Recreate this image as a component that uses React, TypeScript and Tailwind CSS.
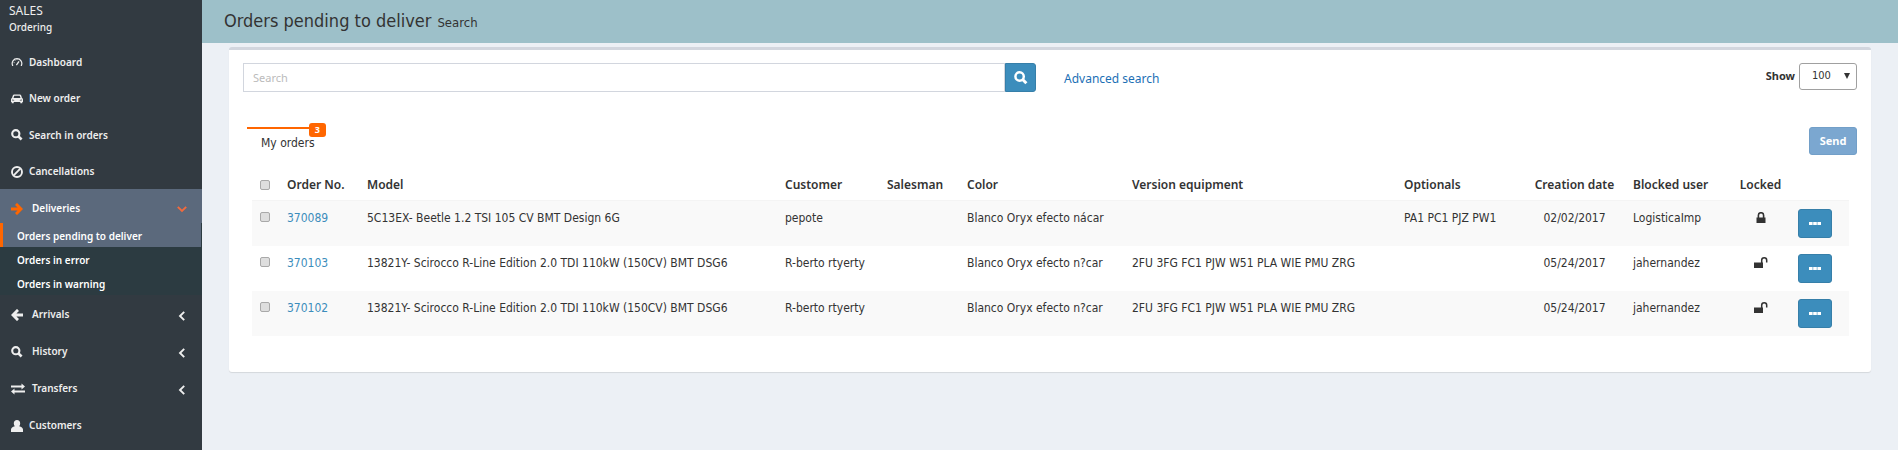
import React from "react";

type IconProps = { className?: string };

const DashboardIcon = ({ className }: IconProps) => (
  <svg viewBox="0 0 12 12" className={className} fill="none" stroke="currentColor" aria-hidden="true">
    <path d="M2.2 9.4H1.6A4.8 4.8 0 1 1 10.4 9.4H9.8" strokeWidth="1.2" />
    <path d="M5.4 9.2L8 5.4" strokeWidth="1.3" />
    <path d="M2.6 6.6h1M4 4.3l.6.6M6 3.2v.9" strokeWidth=".8" />
  </svg>
);

const CarIcon = ({ className }: IconProps) => (
  <svg viewBox="0 0 12 12" className={className} fill="currentColor" fillRule="evenodd" aria-hidden="true">
    <path d="M3.2 1.500H8.800C9.500 1.500 10 1.900 10.200 2.500L11 5C11.600 5.300 12 5.800 12 6.500V9H11.300V10.300H9.300V9H2.700V10.300H.7V9H0V6.500C0 5.800 .4 5.300 1 5L1.800 2.500C2 1.900 2.500 1.500 3.200 1.500zM3.300 2.700L2.500 4.900H9.500L8.700 2.700zM1.200 6.400V7.500H3.200V6.900zM10.800 6.400V7.500H8.800V6.900z" />
  </svg>
);

const SearchIcon = ({ className }: IconProps) => (
  <svg viewBox="0 0 12 12" className={className} fill="none" stroke="currentColor" aria-hidden="true">
    <circle cx="4.8" cy="4.7" r="3.6" strokeWidth="2.1" />
    <path d="M7.4 7.3L10.600 10.500" strokeWidth="2.600" />
  </svg>
);

const BanIcon = ({ className }: IconProps) => (
  <svg viewBox="0 0 12 12" className={className} fill="none" stroke="currentColor" strokeWidth="1.900" aria-hidden="true">
    <circle cx="6" cy="6" r="5" />
    <path d="M2.700 9.300L9.300 2.700" />
  </svg>
);

const ArrowIcon = ({ className }: IconProps) => (
  <svg viewBox="0 0 12 12" className={className} fill="none" stroke="currentColor" strokeWidth="2.800" aria-hidden="true">
    <path d="M0 6H10M5 .9L10.100 6L5 11.100" />
  </svg>
);

const TransferIcon = ({ className }: IconProps) => (
  <svg viewBox="0 0 14 12" className={className} fill="currentColor" aria-hidden="true">
    <path d="M0 2.600H10.500V.5L14 3.500L10.500 6.500V4.400H0zM14 7.600H3.500V5.600L0 8.500L3.500 11.500V9.400H14z" />
  </svg>
);

const UserIcon = ({ className }: IconProps) => (
  <svg viewBox="0 0 12 12" className={className} fill="currentColor" aria-hidden="true">
    <path d="M6 0C8 0 9.200 1.500 9.200 3.400C9.200 4.500 8.800 5.500 8.200 6.200C10.400 6.700 12 7.800 12 9.600V12H0V9.600C0 7.800 1.600 6.700 3.800 6.200C3.200 5.500 2.800 4.500 2.800 3.400C2.800 1.500 4 0 6 0z" />
  </svg>
);

const ChevronIcon = ({ className }: IconProps) => (
  <svg viewBox="0 0 10 10" className={className} fill="none" stroke="currentColor" strokeWidth="1.900" aria-hidden="true">
    <path d="M7.200 .8L3 5L7.200 9.200" />
  </svg>
);

const LockIcon = ({ open }: { open: boolean }) => (
  <svg viewBox="0 0 14 12" className="inline-block h-3 w-3.5" role="img" aria-label={open ? "Unlocked" : "Locked"}>
    {open ? (
      <>
        <path d="M0 5.500H9V11H0z" fill="currentColor" />
        <path d="M7.700 6V3.300A2.500 2.500 0 0 1 12.700 3.300V5.500" fill="none" stroke="currentColor" strokeWidth="1.500" />
      </>
    ) : (
      <>
        <path d="M2.500 5.500H11.500V11H2.500z" fill="currentColor" />
        <path d="M4.400 6V3.300A2.600 2.600 0 0 1 9.600 3.300V6" fill="none" stroke="currentColor" strokeWidth="1.600" />
      </>
    )}
  </svg>
);

const topItems = [
  { label: "Dashboard", Icon: DashboardIcon },
  { label: "New order", Icon: CarIcon },
  { label: "Search in orders", Icon: SearchIcon },
  { label: "Cancellations", Icon: BanIcon },
];

const bottomItems = [
  { label: "Arrivals", Icon: ArrowIcon, iconClass: "h-3 w-3 rotate-180", tree: true },
  { label: "History", Icon: SearchIcon, iconClass: "h-3 w-3", tree: true },
  { label: "Transfers", Icon: TransferIcon, iconClass: "h-3 w-3.5", tree: true },
  { label: "Customers", Icon: UserIcon, iconClass: "h-3 w-3", tree: false },
];

const orders = [
  { no: "370089", model: "5C13EX- Beetle 1.2 TSI 105 CV BMT Design 6G", customer: "pepote", color: "Blanco Oryx efecto nácar", version: "", optionals: "PA1 PC1 PJZ PW1", date: "02/02/2017", user: "LogisticaImp", open: false },
  { no: "370103", model: "13821Y- Scirocco R-Line Edition 2.0 TDI 110kW (150CV) BMT DSG6", customer: "R-berto rtyerty", color: "Blanco Oryx efecto n?car", version: "2FU 3FG FC1 PJW W51 PLA WIE PMU ZRG", optionals: "", date: "05/24/2017", user: "jahernandez", open: true },
  { no: "370102", model: "13821Y- Scirocco R-Line Edition 2.0 TDI 110kW (150CV) BMT DSG6", customer: "R-berto rtyerty", color: "Blanco Oryx efecto n?car", version: "2FU 3FG FC1 PJW W51 PLA WIE PMU ZRG", optionals: "", date: "05/24/2017", user: "jahernandez", open: true },
];

const checkboxClass =
  "block h-2.5 w-2.5 appearance-none rounded-[2px] border border-[#a9a9a9] bg-[#dedede] checked:bg-[#3c8dbc]";

function Sidebar() {
  return (
    <aside className="w-[202px] shrink-0 bg-[#323a41] font-['Noto_Sans',sans-serif] text-[10px] font-semibold text-[#eeeeee]">
      <div className="h-[43px] px-[9px] pt-[3px] font-normal">
        <p className="text-xs leading-4">SALES</p>
        <p className="text-[10px] leading-4 font-medium">Ordering</p>
      </div>
      <nav aria-label="Main">
        <ul className="grid h-[146px] grid-rows-4">
          {topItems.map(({ label, Icon }) => (
            <li key={label}>
              <a href="#" className="flex h-full items-center gap-1.5 px-[11px] pt-0.5">
                <Icon className="h-3 w-3" />
                {label}
              </a>
            </li>
          ))}
        </ul>
        <a href="#" className="flex h-[34px] items-center bg-[#5b697c] px-[11px] pt-1.5 text-white">
          <ArrowIcon className="mr-[9px] h-3 w-3 text-[#ff6600]" />
          Deliveries
          <ChevronIcon className="mr-1 ml-auto h-2.5 w-2.5 -rotate-90 text-[#f26a3c]" />
        </a>
        <ul className="bg-[#2c3b41] text-white">
          <li className="mr-px border-l-[3px] border-[#ff6600] bg-[#5b697c]">
            <a href="#" aria-current="page" className="block pt-0.5 pl-3.5 leading-[22px]">Orders pending to deliver</a>
          </li>
          <li><a href="#" className="block pt-0.5 pl-[17px] leading-[22px]">Orders in error</a></li>
          <li><a href="#" className="block pt-0.5 pl-[17px] leading-[22px]">Orders in warning</a></li>
        </ul>
        <ul className="grid h-[148px] grid-rows-4">
          {bottomItems.map(({ label, Icon, iconClass, tree }) => (
            <li key={label}>
              <a href="#" className="flex h-full items-center px-[11px] pt-0.5">
                <span className={tree ? "w-[21px]" : "w-[18px]"}>
                  <Icon className={iconClass} />
                </span>
                {label}
                {tree && <ChevronIcon className="mt-0.5 mr-1 ml-auto h-2.5 w-2.5" />}
              </a>
            </li>
          ))}
        </ul>
      </nav>
    </aside>
  );
}

export default function App() {
  return (
    <div className="flex min-h-screen bg-[#ecf0f5] font-['DejaVu_Sans_Condensed','Noto_Sans',sans-serif] text-xs text-[#333333]">
      <Sidebar />
      <main className="min-w-0 flex-1">
        <header className="flex h-[43px] items-baseline gap-1.5 bg-[#9dc0c9] px-[22px] pt-[9px]">
          <h1 className="text-lg leading-6">Orders pending to deliver</h1>
          <small className="text-[13px]">Search</small>
        </header>

        <section className="mx-[27px] mt-1 rounded-[3px] border-t-[3px] border-[#d2d6de] bg-white px-3.5 pt-[13px] pb-9 shadow-[0_1px_1px_rgba(0,0,0,0.1)]">
          <div className="flex items-start">
            <form className="flex w-1/2 pr-3.5" onSubmit={(e) => e.preventDefault()}>
              <input
                type="search"
                aria-label="Search"
                placeholder="Search"
                className="h-[29px] min-w-0 flex-1 border border-[#d2d6de] px-[9px] font-['Noto_Sans',sans-serif] text-[11px] placeholder:text-[#bbbbbb]"
              />
              <button type="submit" aria-label="Search" className="flex h-[29px] w-[31px] items-center justify-center rounded-r-[3px] border border-[#367fa9] bg-[#3c8dbc] text-white">
                <SearchIcon className="h-3.5 w-3.5" />
              </button>
            </form>
            <a href="#" className="pl-3.5 font-['Noto_Sans',sans-serif] leading-8 text-[#1b6fb5]">Advanced search</a>
            <div className="ml-auto flex items-center gap-1">
              <label htmlFor="page-size" className="font-['Noto_Sans',sans-serif] text-[11px] font-bold">Show</label>
              <div className="relative">
                <select id="page-size" defaultValue="100" className="h-[27px] w-[58px] appearance-none rounded-[3px] border border-[#a0a0a0] bg-white pl-3 text-[11px]">
                  <option>25</option>
                  <option>50</option>
                  <option>100</option>
                </select>
                <svg viewBox="0 0 6 6" className="pointer-events-none absolute top-2.5 right-[7px] h-1.5 w-1.5" aria-hidden="true">
                  <path d="M0 0H6L3 6z" fill="currentColor" />
                </svg>
              </div>
            </div>
          </div>

          <div className="mt-8 flex items-start justify-between pl-1">
            <div className="relative border-t-2 border-[#ff6600]">
              <a href="#" className="block w-[79px] pl-3.5 leading-[28px] whitespace-nowrap">My orders</a>
              <span className="absolute -top-1.5 right-0 rounded-[3px] bg-[#ff6600] px-1.5 font-['Noto_Sans',sans-serif] text-[9px] leading-3.5 font-bold text-white">3</span>
            </div>
            <button type="button" disabled className="h-7 w-12 rounded-[3px] border border-[#729fc8] bg-[#7ba7d0] font-['Noto_Sans',sans-serif] text-[11px] font-bold text-white">Send</button>
          </div>

          <div className="mt-2 pr-2 pl-[9px]">
            <table className="w-full table-fixed border-collapse text-left">
              <colgroup>
                <col className="w-[27px]" />
                <col className="w-[80px]" />
                <col />
                <col className="w-[102px]" />
                <col className="w-[80px]" />
                <col className="w-[165px]" />
                <col className="w-[272px]" />
                <col className="w-[128px]" />
                <col className="w-[101px]" />
                <col className="w-[106px]" />
                <col className="w-[59px]" />
                <col className="w-[59px]" />
              </colgroup>
              <thead>
                <tr className="h-[35px] border-b border-[#f4f4f4] font-['Noto_Sans',sans-serif] text-xs whitespace-nowrap [&>th]:px-2 [&>th]:pt-1.5 [&>th]:font-semibold">
                  <th scope="col"><input type="checkbox" aria-label="Select all orders" className={checkboxClass} /></th>
                  <th scope="col">Order No.</th>
                  <th scope="col">Model</th>
                  <th scope="col">Customer</th>
                  <th scope="col">Salesman</th>
                  <th scope="col">Color</th>
                  <th scope="col">Version equipment</th>
                  <th scope="col">Optionals</th>
                  <th scope="col" className="text-center">Creation date</th>
                  <th scope="col">Blocked user</th>
                  <th scope="col" className="text-center">Locked</th>
                  <td />
                </tr>
              </thead>
              <tbody>
                {orders.map((o) => (
                  <tr key={o.no} className="align-top leading-[18px] whitespace-nowrap odd:bg-[#f9f9f9] [&>td]:px-2 [&>td]:py-2">
                    <td><input type="checkbox" aria-label={`Select order ${o.no}`} className={`${checkboxClass} mt-[3px]`} /></td>
                    <td><a href="#" className="text-[#3c8dbc]">{o.no}</a></td>
                    <td>{o.model}</td>
                    <td>{o.customer}</td>
                    <td />
                    <td>{o.color}</td>
                    <td>{o.version}</td>
                    <td>{o.optionals}</td>
                    <td className="text-center">{o.date}</td>
                    <td>{o.user}</td>
                    <td className="text-center"><LockIcon open={o.open} /></td>
                    <td>
                      <button type="button" aria-label={`Actions for order ${o.no}`} className="flex h-[29px] w-[34px] items-center justify-center rounded-[3px] border border-[#367fa9] bg-[#3c8dbc]">
                        <svg viewBox="0 0 12 3" className="h-[3px] w-3" fill="#ffffff" aria-hidden="true">
                          <path d="M0 0h3.600v3H0zM4.200 0h3.600v3H4.200zM8.400 0H12v3H8.400z" />
                        </svg>
                      </button>
                    </td>
                  </tr>
                ))}
              </tbody>
            </table>
          </div>
        </section>
      </main>
    </div>
  );
}
